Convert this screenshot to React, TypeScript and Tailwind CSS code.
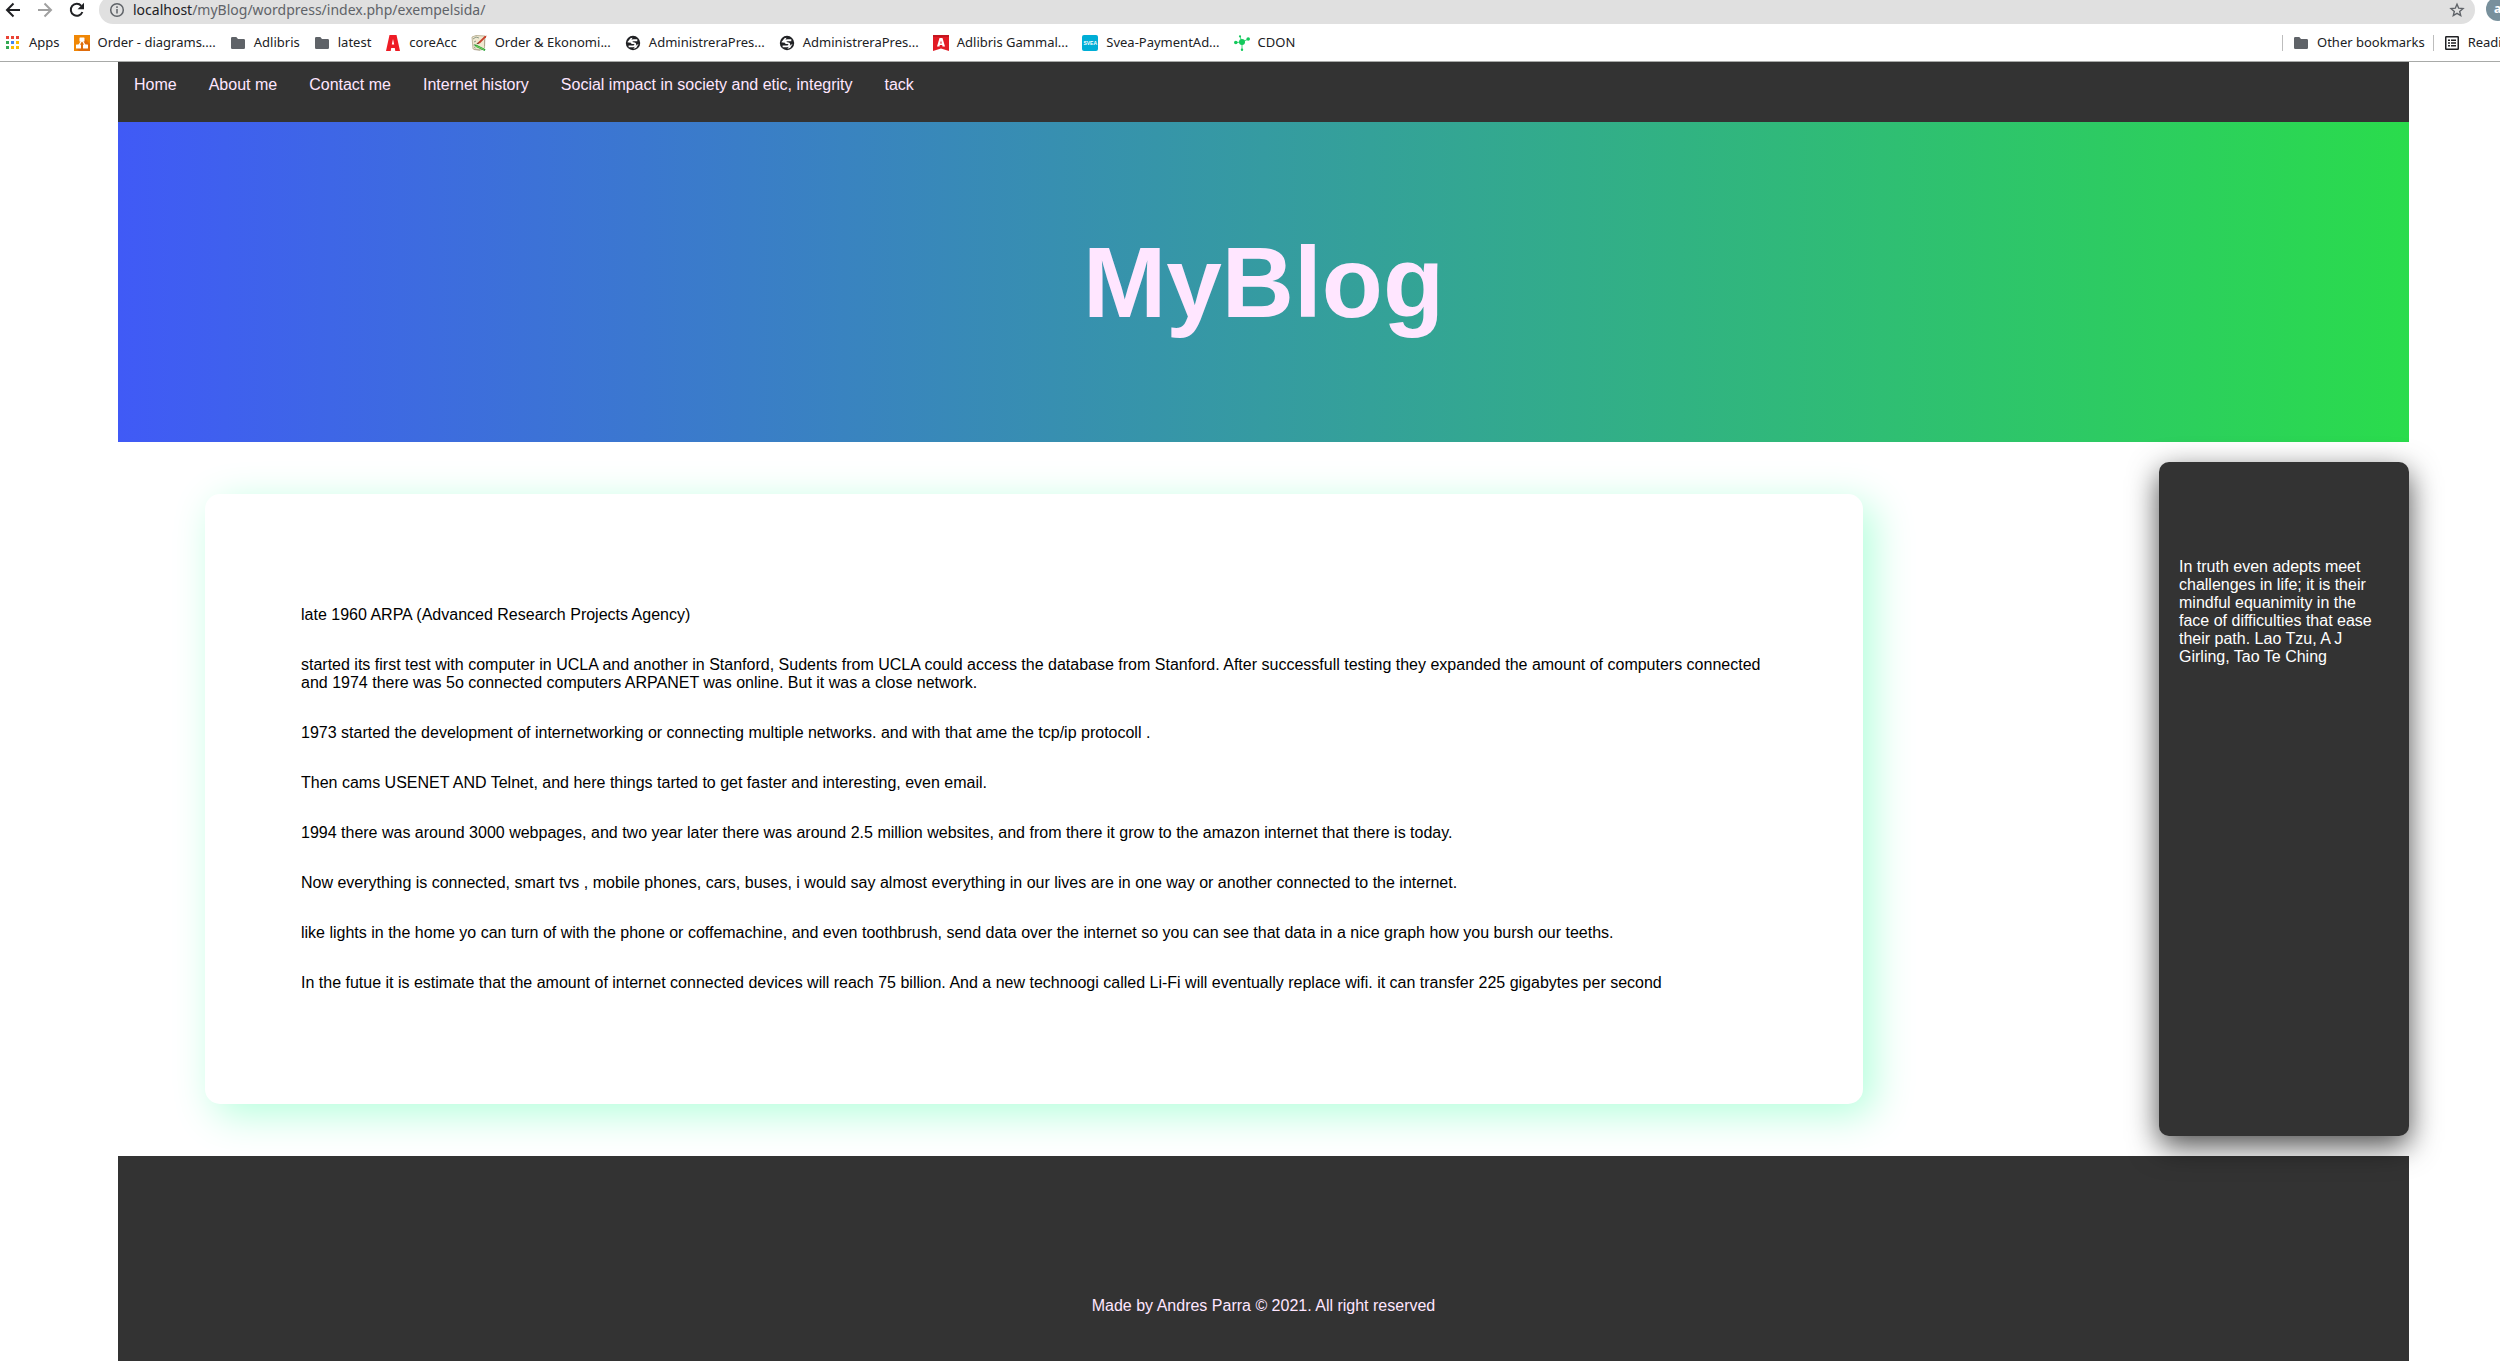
import React from "react";

const navItems = ["Home", "About me", "Contact me", "Internet history", "Social impact in society and etic, integrity", "tack"];

const paragraphs = [
  "late 1960 ARPA (Advanced Research Projects Agency)",
  "started its first test with computer in UCLA and another in Stanford, Sudents from UCLA could access the database from Stanford. After successfull testing they expanded the amount of computers connected and 1974 there was 5o connected computers ARPANET was online. But it was a close network.",
  "1973 started the development of internetworking or connecting multiple networks. and with that ame the tcp/ip protocoll .",
  "Then cams USENET AND Telnet, and here things tarted to get faster and interesting, even email.",
  "1994 there was around 3000 webpages, and two year later there was around 2.5 million websites, and from there it grow to the amazon internet that there is today.",
  "Now everything is connected, smart tvs , mobile phones, cars, buses, i would say almost everything in our lives are in one way or another connected to the internet.",
  "like lights in the home yo can turn of with the phone or coffemachine, and even toothbrush, send data over the internet so you can see that data in a nice graph how you bursh our teeths.",
  "In the futue it is estimate that the amount of internet connected devices will reach 75 billion. And a new technoogi called Li-Fi will eventually replace wifi. it can transfer 225 gigabytes per second",
];

function AppsIcon() {
  const colors = ["#ea4335", "#ea4335", "#ea4335", "#34a853", "#4285f4", "#fbbc04", "#34a853", "#fbbc04", "#fbbc04"];
  return (
    <svg className="size-4 shrink-0" viewBox="0 0 16 16" aria-hidden="true">
      {colors.map((c, i) => (
        <rect key={i} x={1 + (i % 3) * 5} y={1 + Math.floor(i / 3) * 5} width="3" height="3" fill={c} />
      ))}
    </svg>
  );
}

function DiagramsIcon() {
  return (
    <svg className="size-4 shrink-0" viewBox="0 0 16 16" aria-hidden="true">
      <rect width="16" height="16" fill="#f08705" />
      <path d="M10 3l6 6v7H5l-2-2z" fill="#df6c0c" />
      <path d="M8 5L4.500 11M8 5l3.500 6" stroke="#fff" strokeWidth="1.300" />
      <rect x="5.500" y="2.500" width="5" height="4" rx=".6" fill="#fff" />
      <rect x="2" y="9.500" width="5" height="4" rx=".6" fill="#fff" />
      <rect x="9" y="9.500" width="5" height="4" rx=".6" fill="#fff" />
    </svg>
  );
}

function FolderIcon() {
  return (
    <svg className="size-4 shrink-0" viewBox="0 0 16 16" aria-hidden="true">
      <path d="M2.300 2h4l1.700 2h5.700Q15 4 15 5.300v7.400q0 1.300-1.300 1.300H2.300Q1 14 1 12.700V3.300Q1 2 2.300 2z" fill="#5f6368" />
    </svg>
  );
}

function CoreIcon() {
  return (
    <svg className="size-4 shrink-0" viewBox="0 0 16 16" aria-hidden="true">
      <path fillRule="evenodd" d="M4.500 0h7L15 16h-4.700l-.5-3H6.200l-.5 3H1zM8 4l-1.200 5.500h2.400z" fill="#ee1c25" />
    </svg>
  );
}

function NotesIcon() {
  return (
    <svg className="size-4 shrink-0" viewBox="0 0 16 16" aria-hidden="true">
      <path d="M1 2l4-1.500L14 1l-.5 12L10 15l-8-1z" fill="#efe8d0" stroke="#b0a688" strokeWidth=".8" />
      <path d="M2 4l3-2 3 1M3 7l2-1M2.500 10h2M3 12l1.500 1" stroke="#8e9a86" fill="none" />
      <path d="M15.500.5l-2 .8L8 6.500 5.500 9l3.500-.7 6-6z" fill="#c7402b" />
      <path d="M5.500 9l1.600-1.600 1 1z" fill="#513021" />
      <path d="M3 9.500l2.500.2 9 4.500-.8 1.800L5 12z" fill="#27a336" />
      <path d="M5 11l8 3.500" stroke="#9ee06c" strokeWidth=".7" />
      <path d="M13.500 4.500v6.500M3 14.500l6 .8" stroke="#a9a08a" strokeWidth=".8" />
    </svg>
  );
}

function GlobeIcon() {
  return (
    <svg className="size-4 shrink-0" viewBox="0 0 16 16" aria-hidden="true">
      <circle cx="8" cy="8" r="7.200" fill="#202124" />
      <path
        d="M12.300 5.300H8.600Q6.300 5.300 6.300 6.700T8.400 8.100Q10.600 8.200 10.300 9.900T7.600 11.400H3.600"
        fill="none"
        stroke="#fff"
        strokeWidth="1.900"
      />
      <path d="M2.300 7.300l3.200-4 2-.6-1 2.200-1 2.800zM13.700 8.700l-2.400 4-3 1.200 2-3z" fill="#fff" />
    </svg>
  );
}

function AdlibrisIcon() {
  return (
    <svg className="size-4 shrink-0" viewBox="0 0 16 16" aria-hidden="true">
      <path d="M0 0h16v16l-8-2.500L0 16z" fill="#e21b25" />
      <path d="M0 0h16v2H0z" fill="#c4161f" />
      <path fillRule="evenodd" d="M6.500 3h3L12 11.500H9.500L9.200 10H6.800l-.3 1.500H4zM8 5.500L7.200 8.400h1.600z" fill="#fff" />
    </svg>
  );
}

function SveaIcon() {
  return (
    <span className="flex size-4 shrink-0 items-center justify-center rounded-xs bg-[#00aed6] font-['Liberation_Sans',sans-serif] text-[5px] leading-none font-bold text-white" aria-hidden="true">
      SVEA
    </span>
  );
}

function CdonIcon() {
  return (
    <svg className="size-4 shrink-0" viewBox="0 0 16 16" aria-hidden="true">
      <path d="M8 7L2 7.500M8 7L6 1.500M8 7l6.500-3M8 7v7.500" stroke="#12c95b" strokeWidth=".8" />
      <g fill="#12c95b">
        <circle cx="8" cy="7" r="3" />
        <circle cx="1.800" cy="7.500" r="1.800" />
        <circle cx="14.200" cy="4" r="1.800" />
        <circle cx="6" cy="1.300" r="1.100" />
        <circle cx="8" cy="14.800" r="1.200" />
      </g>
    </svg>
  );
}

function ReadingIcon() {
  return (
    <svg className="size-4 shrink-0" viewBox="0 0 16 16" aria-hidden="true">
      <rect x="1.750" y="1.750" width="12.500" height="12.500" rx=".5" fill="none" stroke="#202124" strokeWidth="1.500" />
      <path d="M4 5.250h2M4 8h2M4 10.750h2M7 5.250h5M7 8h5M7 10.750h5" stroke="#202124" strokeWidth="1.500" />
    </svg>
  );
}

const bookmarks = [
  { label: "Apps", Icon: AppsIcon },
  { label: "Order - diagrams....", Icon: DiagramsIcon },
  { label: "Adlibris", Icon: FolderIcon },
  { label: "latest", Icon: FolderIcon },
  { label: "coreAcc", Icon: CoreIcon },
  { label: "Order & Ekonomi...", Icon: NotesIcon },
  { label: "AdministreraPres...", Icon: GlobeIcon },
  { label: "AdministreraPres...", Icon: GlobeIcon },
  { label: "Adlibris Gammal...", Icon: AdlibrisIcon },
  { label: "Svea-PaymentAd...", Icon: SveaIcon },
  { label: "CDON", Icon: CdonIcon },
];

function Bookmark({ label, Icon }: { label: string; Icon: () => React.ReactElement }) {
  return (
    <button type="button" className="flex shrink-0 items-center gap-2 whitespace-nowrap">
      <Icon />
      {label}
    </button>
  );
}

function BrowserBar() {
  return (
    <div className="shrink-0 overflow-hidden border-b border-[#a8aaa8] bg-white font-['Noto_Sans',sans-serif] text-[#202124]">
      <div className="flex h-6 items-end overflow-hidden pl-[5px]">
        <div className="flex h-7 shrink-0 items-center gap-4">
          <button type="button" aria-label="Back" className="size-4">
            <svg viewBox="0 0 16 16" fill="none" stroke="#202124" strokeWidth="2">
              <path d="M15 8H2.500M8.500 1.500L2 8l6.500 6.500" />
            </svg>
          </button>
          <button type="button" aria-label="Forward" className="size-4">
            <svg viewBox="0 0 16 16" fill="none" stroke="#a0a0a0" strokeWidth="2">
              <path d="M1 8h12.500M7.500 1.500L14 8l-6.500 6.500" />
            </svg>
          </button>
          <button type="button" aria-label="Reload" className="size-4">
            <svg viewBox="0 0 16 16" fill="none">
              <path d="M13.400 10A6 6 0 1 1 12.300 3.800" stroke="#202124" strokeWidth="2" />
              <path d="M15 .8v6.400H8.600z" fill="#202124" />
            </svg>
          </button>
        </div>
        <div className="ml-[14px] flex h-7 min-w-0 flex-1 items-center rounded-full bg-[#e0e0e0] pr-[10px] pl-[10px]">
          <svg className="size-4 shrink-0" viewBox="0 0 16 16" fill="none" stroke="#5f6368" strokeWidth="1.500" aria-hidden="true">
            <circle cx="8" cy="8" r="6.300" />
            <path d="M8 7v4.500M8 4.300v1.600" />
          </svg>
          <div className="ml-2 min-w-0 flex-1 truncate text-sm text-[#5f6368]">
            <span className="text-[#202124]">localhost</span>/myBlog/wordpress/index.php/exempelsida/
          </div>
          <button type="button" aria-label="Bookmark this page" className="size-4 shrink-0">
            <svg viewBox="0 0 16 16" fill="none" stroke="#5f6368" strokeWidth="1.400">
              <path d="M8 2.200l1.700 4 4.300.4-3.300 2.800 1 4.200L8 11.400l-3.700 2.200 1-4.200L2 6.600l4.300-.4z" />
            </svg>
          </button>
        </div>
        <div className="ml-[11px] w-[14px] shrink-0 overflow-hidden pb-[3px]">
          <div className="flex size-6 items-center rounded-full bg-[#78909c] pl-2 text-xs font-bold text-white">a</div>
        </div>
      </div>
      <div className="flex h-[37px] items-center justify-between gap-4 pt-px pl-[5px] text-[13px]">
        <div className="flex min-w-0 items-center gap-[14px] overflow-hidden">
          {bookmarks.map((b, i) => (
            <Bookmark key={i} {...b} />
          ))}
        </div>
        <div className="flex w-[218px] shrink-0 items-center overflow-hidden">
          <div className="mr-[10px] h-4 w-px shrink-0 bg-[#bdbdbd]" />
          <Bookmark label="Other bookmarks" Icon={FolderIcon} />
          <div className="mr-[10px] ml-2 h-4 w-px shrink-0 bg-[#bdbdbd]" />
          <Bookmark label="Reading list" Icon={ReadingIcon} />
        </div>
      </div>
    </div>
  );
}

export default function App() {
  return (
    <div className="flex h-screen flex-col overflow-hidden bg-white">
      <BrowserBar />
      <div className="mr-[91px] ml-[118px] flex flex-1 flex-col font-['Liberation_Sans',Arial,sans-serif] text-base leading-[18px] text-[#ffe6ff]">
        <nav className="flex h-[60px] shrink-0 items-start gap-8 bg-[#333333] px-4 pt-[14px]">
          {navItems.map((item) => (
            <a key={item} href="#">{item}</a>
          ))}
        </nav>
        <header className="flex h-80 shrink-0 justify-center bg-linear-to-r/srgb from-[#405af6] to-[#2adc4c] pt-[103px]">
          <h1 className="text-[100px] leading-[115px] font-bold">MyBlog</h1>
        </header>
        <main className="flex shrink-0 items-stretch justify-between py-5">
          <article className="mt-8 mb-8 ml-[87px] flex w-[1658px] flex-col gap-8 rounded-[15px] bg-white px-24 py-28 text-black shadow-[10px_10px_40px_#b2ffdb]">
            {paragraphs.map((p) => (
              <p key={p}>{p}</p>
            ))}
          </article>
          <aside className="z-10 w-[250px] rounded-[10px] bg-[#333333] px-5 py-24 text-white shadow-[0_10px_30px_rgba(0,0,0,0.7)]">
            In truth even adepts meet challenges in life; it is their mindful equanimity in the face of difficulties that ease their path. Lao Tzu, A J Girling, Tao Te Ching
          </aside>
        </main>
        <footer className="flex-1 bg-[#333333] pt-[141px] text-center">Made by Andres Parra © 2021. All right reserved</footer>
      </div>
    </div>
  );
}
